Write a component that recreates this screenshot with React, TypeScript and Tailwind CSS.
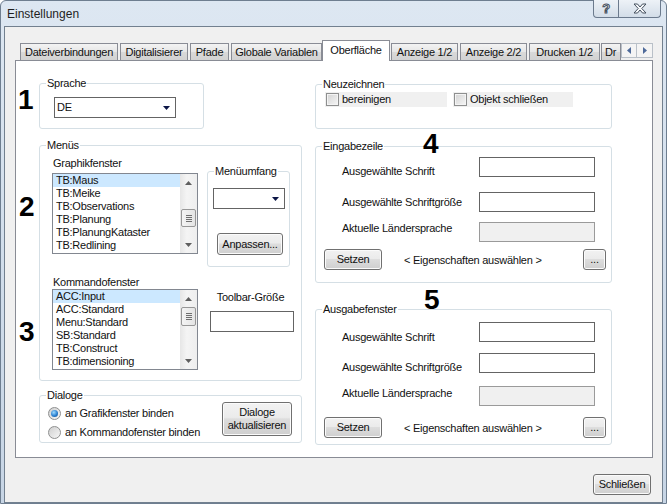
import React from 'react';

const Btn: React.FC<{ className?: string; children?: React.ReactNode }> = ({ className = '', children }) => (
  <div
    className={`flex items-center justify-center text-center leading-[13px] border border-[#707070] rounded-[3px] bg-[linear-gradient(#f2f2f2,#ebebeb_45%,#dddddd_50%,#cfcfcf)] shadow-[inset_0_0_0_1px_#fbfbfb] ${className}`}
  >
    {children}
  </div>
);

const Group: React.FC<{ legend: string; className?: string; children?: React.ReactNode }> = ({ legend, className = '', children }) => (
  <div className={`relative border border-[#d5dfe5] rounded-[3px] ${className}`}>
    <span className="absolute left-[6px] top-[-7px] bg-white px-px leading-[13px] whitespace-nowrap">{legend}</span>
    {children}
  </div>
);

const Combo: React.FC<{ value?: string; className?: string }> = ({ value = '', className = '' }) => (
  <div className={`flex items-center border border-[#646464] bg-white ${className}`}>
    <span className="flex-1 pl-[2px] leading-[13px]">{value}</span>
    <span className="flex w-[17px] justify-center">
      <svg width="7" height="4" viewBox="0 0 7 4">
        <path d="M0 0H7L3.5 4Z" fill="#0b1546" />
      </svg>
    </span>
  </div>
);

const Arrow: React.FC<{ down?: boolean }> = ({ down }) => (
  <svg width="7" height="4" viewBox="0 0 7 4">
    <path d={down ? 'M0 0H7L3.5 4Z' : 'M0 4L3.5 0L7 4Z'} fill="#5f5f5f" />
  </svg>
);

const ListBox: React.FC<{ items: string[]; thumbClass: string }> = ({ items, thumbClass }) => (
  <div className="flex h-[81px] w-[146px] border border-[#828790] bg-white">
    <div className="flex-1 overflow-hidden">
      {items.map((item, i) => (
        <div key={i} className={`h-[13px] leading-[13px] pl-[3px] whitespace-nowrap ${i === 0 ? 'bg-[#cce8ff]' : ''}`}>
          {item}
        </div>
      ))}
    </div>
    <div className="flex w-[17px] flex-col bg-[linear-gradient(90deg,#e6e6e6,#f4f4f4_40%,#eeeeee)]">
      <div className="flex h-[17px] items-center justify-center">
        <Arrow />
      </div>
      <div
        className={`mx-px flex flex-col items-center justify-center gap-px border border-[#979797] rounded-[2px] bg-[linear-gradient(90deg,#f4f4f4,#e4e4e4)] ${thumbClass}`}
      >
        <div className="h-px w-[6px] bg-[#6f6f6f]" />
        <div className="h-px w-[6px] bg-[#6f6f6f]" />
        <div className="h-px w-[6px] bg-[#6f6f6f]" />
        <div className="h-px w-[6px] bg-[#6f6f6f]" />
      </div>
      <div className="flex-1" />
      <div className="flex h-[17px] items-center justify-center">
        <Arrow down />
      </div>
    </div>
  </div>
);

const Check: React.FC<{ label: string; className?: string }> = ({ label, className = '' }) => (
  <div className={`flex h-[15px] items-center bg-[#f0f0f0] ${className}`}>
    <div className="ml-px h-[13px] w-[13px] border border-[#8e8f8f] bg-[linear-gradient(135deg,#d3d3d3,#f6f6f6)] shadow-[inset_0_0_0_1px_#f4f4f4]" />
    <span className="ml-[3px] leading-[13px]">{label}</span>
  </div>
);

const Radio: React.FC<{ checked?: boolean }> = ({ checked }) => (
  <div className="flex h-[13px] w-[13px] items-center justify-center rounded-full border border-[#8e8f8f] bg-[linear-gradient(135deg,#cfcfcf,#f7f7f7)]">
    {checked && (
      <div className="h-[7px] w-[7px] rounded-full bg-[radial-gradient(circle_at_40%_35%,#9fdcff,#2a7fd0_55%,#154c85)]" />
    )}
  </div>
);

const FieldRow: React.FC<{ label: string; disabled?: boolean; className?: string; labelClass?: string }> = ({
  label,
  disabled,
  className = '',
  labelClass = '',
}) => (
  <div className={`flex h-[20px] pl-[26px] ${className}`}>
    <span className={`w-[137px] leading-[13px] whitespace-nowrap ${labelClass}`}>{label}</span>
    <div className={`h-[20px] w-[116px] border ${disabled ? 'border-[#9a9a9a] bg-[#f0f0f0]' : 'border-[#646464] bg-white'}`} />
  </div>
);

const SetRow: React.FC<{ className?: string }> = ({ className = '' }) => (
  <div className={`flex items-center ${className}`}>
    <Btn className="ml-[8px] h-[21px] w-[58px]">Setzen</Btn>
    <span className="ml-[22px] mt-[2px] leading-[13px]">&lt; Eigenschaften auswählen &gt;</span>
    <Btn className="ml-auto mr-[5px] h-[21px] w-[23px]">...</Btn>
  </div>
);

const Tab: React.FC<{ label: string; className: string }> = ({ label, className }) => (
  <div
    className={`mb-px flex h-[17px] items-center justify-center overflow-hidden whitespace-nowrap border border-b-0 border-[#898c95] bg-[linear-gradient(#f3f3f3,#e6e6e6_50%,#d9d9d9_50%,#d2d2d2)] ${className}`}
  >
    {label}
  </div>
);

const App: React.FC = () => {
  return (
    <div className="flex h-[504px] w-[667px] flex-col rounded-t-[6px] border border-[#6e7e90] bg-[linear-gradient(#dde7f2,#c7d5e5)] font-['Liberation_Sans',Arial,sans-serif] text-[11px] tracking-[-0.25px] text-[#111]">
      {/* title bar */}
      <div className="flex h-[25px] items-start">
        <span className="pl-[6px] pt-[6px] text-[12px] leading-[15px] tracking-normal text-[#1e1e1e]">Einstellungen</span>
        <div className="ml-auto mr-[5px] -mt-px flex h-[18px] rounded-b-[4px] border border-t-0 border-[#6b7a8d] bg-[linear-gradient(#edf2f7,#d3dde8)]">
          <div className="flex w-[25px] items-center justify-center border-r border-[#6b7a8d] text-[13px] font-bold leading-none text-[#f4f6f8] [-webkit-text-stroke:1px_#45505e]">
            ?
          </div>
          <div className="flex w-[41px] items-center justify-center">
            <svg width="14" height="11" viewBox="0 0 14 11">
              <path
                d="M1 1H4.5L7 4L9.5 1H13L8.8 5.5L13 10H9.5L7 7L4.5 10H1L5.2 5.5Z"
                fill="#f7f9fb"
                stroke="#45505e"
                strokeWidth="1"
                strokeLinejoin="round"
              />
            </svg>
          </div>
        </div>
      </div>

      {/* client */}
      <div className="mx-[3px] flex flex-1 flex-col border border-[#72808f] bg-[#f0f0f0]">
        {/* tab strip */}
        <div className="relative z-10 -mb-px ml-[10px] mt-[13px] flex h-[21px] items-end">
          <Tab label="Dateiverbindungen" className="ml-[5px] w-[98px]" />
          <Tab label="Digitalisierer" className="ml-[2px] w-[68px]" />
          <Tab label="Pfade" className="ml-[2px] w-[39px]" />
          <Tab label="Globale Variablen" className="ml-[2px] w-[91px]" />
          <div className="flex h-[21px] w-[68px] items-center justify-center border border-b-0 border-[#898c95] bg-white pb-[2px]">
            Oberfläche
          </div>
          <Tab label="Anzeige 1/2" className="ml-px w-[67px]" />
          <Tab label="Anzeige 2/2" className="ml-[2px] w-[67px]" />
          <Tab label="Drucken 1/2" className="ml-[2px] w-[71px]" />
          <Tab label="Dr" className="ml-px w-[20px] justify-start pl-[3px]" />
          <div className="mb-[3px] flex h-[15px]">
            <div className="flex w-[16px] items-center justify-center border border-[#b9c0c8] bg-[#f4f4f4]">
              <svg width="4" height="7" viewBox="0 0 4 7">
                <path d="M4 0V7L0 3.5Z" fill="#4e6a9a" />
              </svg>
            </div>
            <div className="flex w-[16px] items-center justify-center border border-l-0 border-[#b9c0c8] bg-[#f4f4f4]">
              <svg width="4" height="7" viewBox="0 0 4 7">
                <path d="M0 0V7L4 3.5Z" fill="#4e6a9a" />
              </svg>
            </div>
          </div>
        </div>

        {/* tab page */}
        <div className="relative ml-[10px] flex h-[398px] w-[638px] border border-[#898c95] bg-white">
          <span className="absolute left-[2px] top-[25px] text-[28px] font-bold leading-none text-black">1</span>
          <span className="absolute left-[3px] top-[132px] text-[28px] font-bold leading-none text-black">2</span>
          <span className="absolute left-[3px] top-[257px] text-[28px] font-bold leading-none text-black">3</span>

          {/* left column */}
          <div className="ml-[23px] mt-[22px] flex w-[263px] flex-col">
            <Group legend="Sprache" className="h-[46px] w-[165px]">
              <Combo value="DE" className="ml-[14px] mt-[13px] h-[21px] w-[122px]" />
            </Group>

            <Group legend="Menüs" className="mt-[16px] flex h-[236px]">
              <div className="ml-[12px] flex w-[146px] flex-col">
                <span className="mt-[11px] pl-px leading-[13px]">Graphikfenster</span>
                <div className="mt-[3px]">
                  <ListBox
                    items={['TB:Maus', 'TB:Meike', 'TB:Observations', 'TB:Planung', 'TB:PlanungKataster', 'TB:Redlining']}
                    thumbClass="mt-[18px] h-[18px]"
                  />
                </div>
                <span className="mt-[22px] pl-px leading-[13px]">Kommandofenster</span>
                <ListBox
                  items={['ACC:Input', 'ACC:Standard', 'Menu:Standard', 'SB:Standard', 'TB:Construct', 'TB:dimensioning']}
                  thumbClass="h-[19px]"
                />
              </div>
              <div className="ml-[9px] flex w-[87px] flex-col">
                <Group legend="Menüumfang" className="mt-[25px] h-[96px] w-[83px]">
                  <Combo className="ml-[5px] mt-[16px] h-[21px] w-[72px]" />
                  <Btn className="ml-[9px] mt-[24px] h-[22px] w-[66px]">Anpassen...</Btn>
                </Group>
                <span className="mt-[24px] text-center leading-[13px]">Toolbar-Größe</span>
                <div className="ml-[3px] mt-[7px] h-[21px] w-[84px] border border-[#646464] bg-white" />
              </div>
            </Group>

            <Group legend="Dialoge" className="mt-[14px] flex h-[48px]">
              <div className="ml-[8px] mt-[10px] flex flex-col">
                <div className="flex h-[14px] items-center gap-[4px]">
                  <Radio checked />
                  <span className="leading-[13px]">an Grafikfenster binden</span>
                </div>
                <div className="mt-[5px] flex h-[14px] items-center gap-[4px]">
                  <Radio />
                  <span className="leading-[13px]">an Kommandofenster binden</span>
                </div>
              </div>
              <Btn className="ml-auto mr-[9px] mt-[6px] h-[34px] w-[70px]">
                Dialoge
                <br />
                aktualisieren
              </Btn>
            </Group>
          </div>

          {/* right column */}
          <div className="relative ml-[13px] mt-[23px] flex w-[297px] flex-col">
            <Group legend="Neuzeichnen" className="h-[45px]">
              <div className="ml-[9px] mt-[7px] flex gap-[6px]">
                <Check label="bereinigen" className="w-[122px]" />
                <Check label="Objekt schließen" className="w-[120px]" />
              </div>
            </Group>

            <Group legend="Eingabezeile" className="mt-[17px] h-[137px]">
              <FieldRow label="Ausgewählte Schrift" className="mt-[10px]" labelClass="mt-[8px]" />
              <FieldRow label="Ausgewählte Schriftgröße" className="mt-[15px]" labelClass="mt-[4px]" />
              <FieldRow label="Aktuelle Ländersprache" disabled className="mt-[10px]" labelClass="mt-0" />
              <SetRow className="mt-[7px]" />
            </Group>

            <Group legend="Ausgabefenster" className="mt-[26px] h-[136px]">
              <FieldRow label="Ausgewählte Schrift" className="mt-[12px]" labelClass="mt-[9px]" />
              <FieldRow label="Ausgewählte Schriftgröße" className="mt-[11px]" labelClass="mt-[8px]" />
              <FieldRow label="Aktuelle Ländersprache" disabled className="mt-[13px]" labelClass="mt-px" />
              <SetRow className="mt-[11px]" />
            </Group>
          </div>

          <span className="absolute left-[407px] top-[69px] text-[28px] font-bold leading-none text-black">4</span>
          <span className="absolute left-[408px] top-[225px] text-[28px] font-bold leading-none text-black">5</span>
        </div>

        <div className="mt-[16px] flex justify-end">
          <Btn className="mr-[11px] h-[21px] w-[58px]">Schließen</Btn>
        </div>
      </div>
    </div>
  );
};

export default App;
